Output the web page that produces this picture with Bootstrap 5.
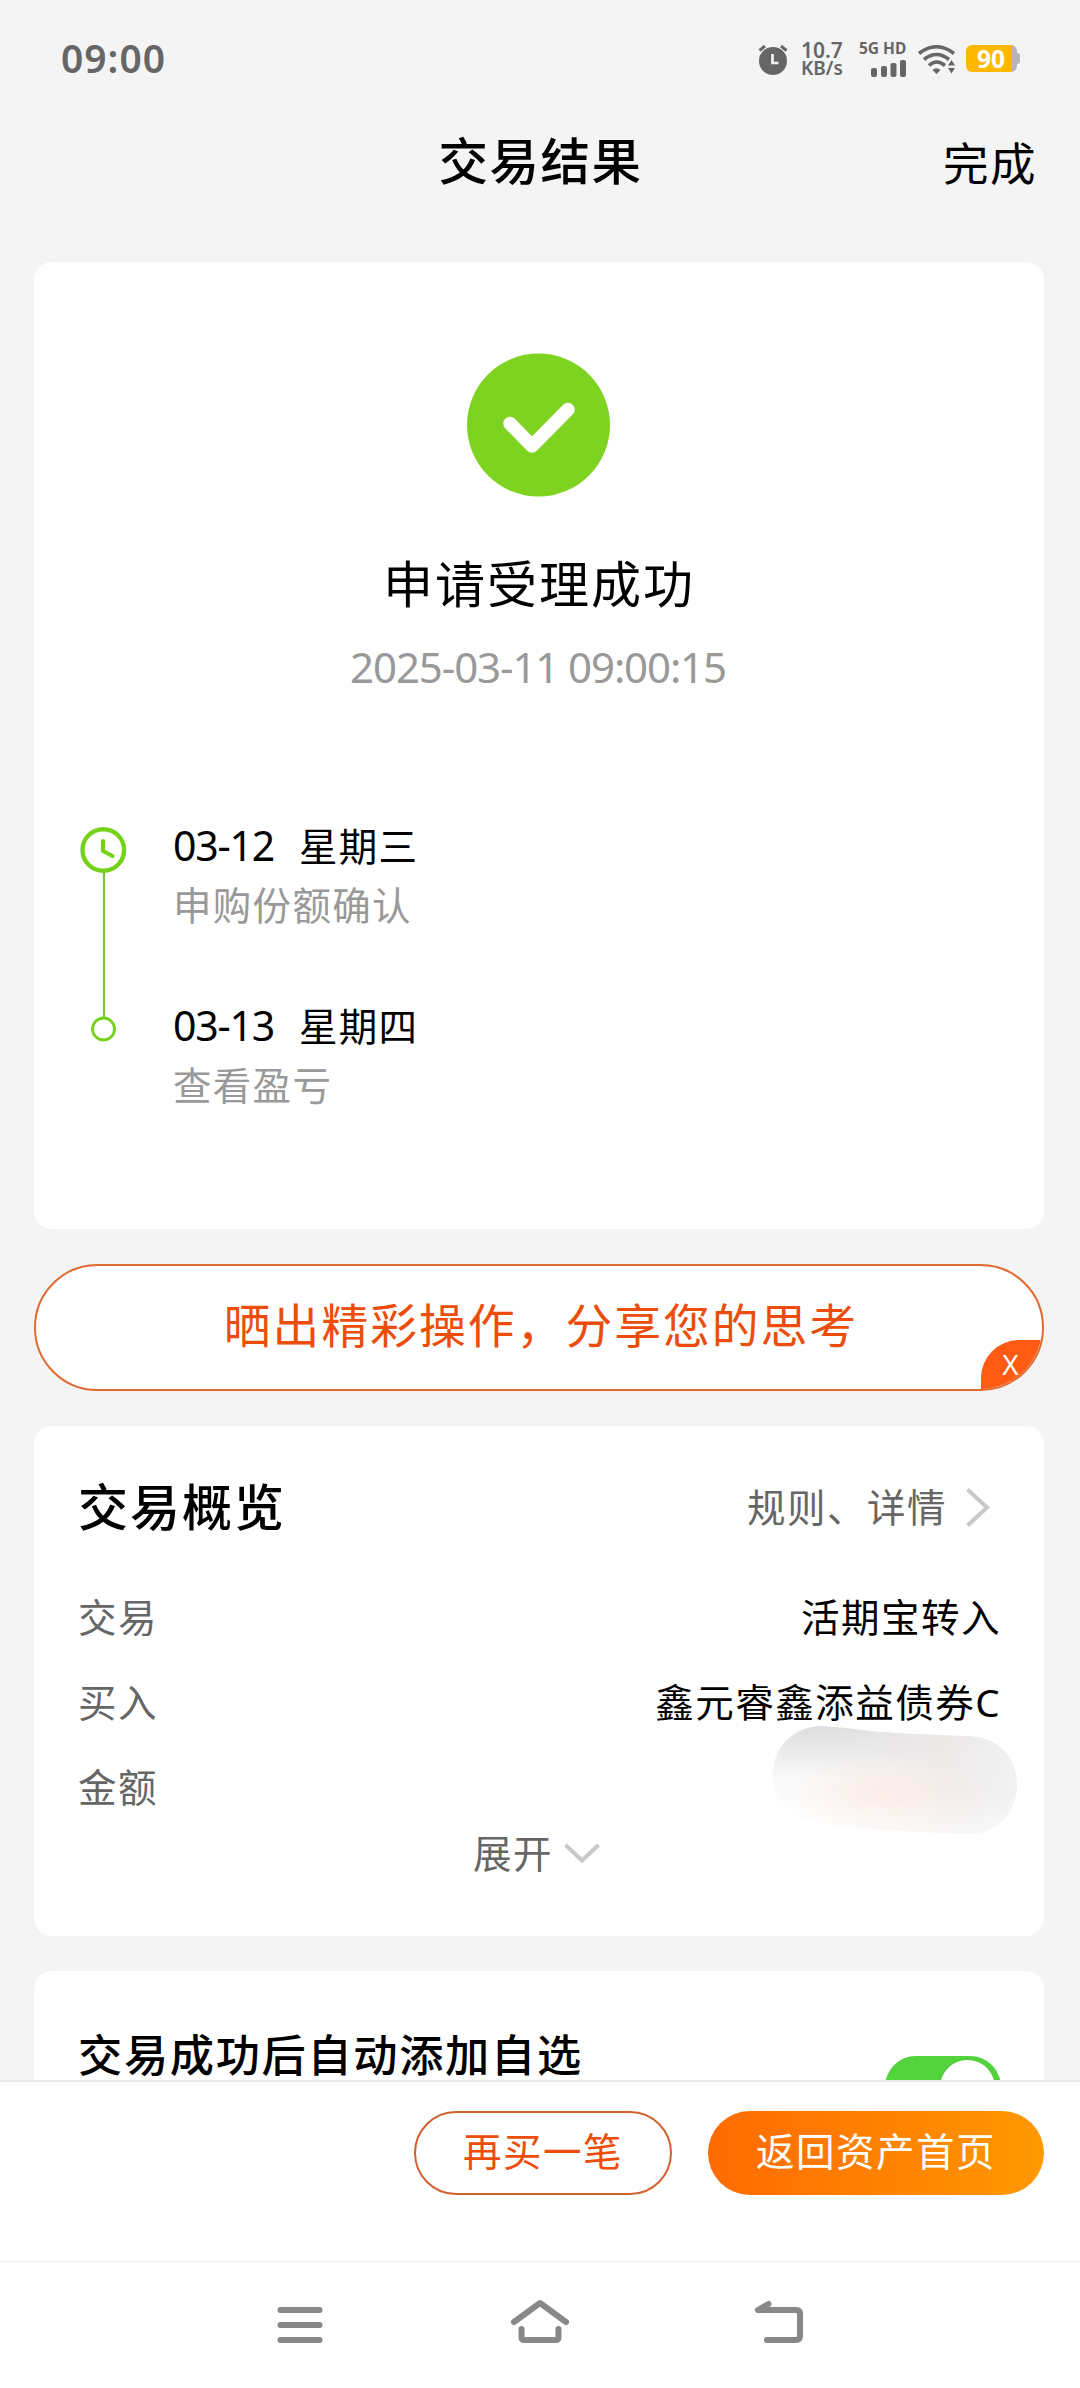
<!DOCTYPE html>
<html lang="zh-CN">
<head>
<meta charset="utf-8">
<meta name="viewport" content="width=device-width, initial-scale=1">
<title>交易结果</title>
<link href="https://cdn.jsdelivr.net/npm/bootstrap@5.3.0/dist/css/bootstrap.min.css" rel="stylesheet">
<style>
  body { font-family: "Noto Sans", "Noto Sans CJK SC", sans-serif; color: #000; background: #f4f4f4; }
  svg { display: block; flex: none; }
  .screen { width: 1080px; height: 2388px; }
  /* status bar */
  .status { height: 110px; color: #666; padding: 3px 60px 0 61px; }
  .clock { font-size: 39px; line-height: 48px; font-weight: 600; letter-spacing: 1px; margin-top: 31px; }
  .indicators { padding-top: 38px; }
  .speed { width: 46px; font-weight: 600; line-height: 18px; font-size: 21px; margin-left: 13px; margin-right: 1px; }
  .speed span + span { font-size: 19px; }
  .net { width: 49px; font-size: 15.5px; line-height: 15px; font-weight: 700; margin-left: 11px; margin-right: 1px; white-space: nowrap; }
  .battery { width: 51px; height: 27px; border-radius: 6px; background: linear-gradient(90deg, #ffb800 46px, #b5b5b5 46px); color: #fff; font-size: 24.5px; line-height: 27px; font-weight: 700; padding-right: 1px; }
  .battery-tip { width: 3px; height: 11px; background: #b5b5b5; border-radius: 0 3px 3px 0; }
  /* header */
  .title-bar { height: 152px; padding: 0 43px 50px 0; }
  .page-title { font-size: 49.5px; font-weight: 500; letter-spacing: 1.5px; line-height: 60px; padding-left: 44px; }
  .done { font-size: 45.5px; letter-spacing: 1.5px; line-height: 60px; padding-top: 3px; }
  /* content */
  .feed { padding: 0 36px 0 34px; gap: 35px; }
  .panel { background: #fff; border-radius: 18px; flex: none; }
  .result { height: 967px; padding-top: 91px; }
  .headline { font-size: 50px; letter-spacing: 2px; line-height: 60px; margin-top: 57px; }
  .stamp { font-size: 42px; letter-spacing: -1.1px; line-height: 50px; color: #999; margin-top: 28px; padding-right: 2px; }
  .steps { padding: 127px 0 0 45px; gap: 46px; }
  .step-row { height: 180px; }
  .step-day { font-size: 38.5px; letter-spacing: 1.2px; line-height: 52px; white-space: pre; }
  .step-day i { font-style: normal; font-size: 41px; letter-spacing: -1.2px; margin-right: 25px; }
  .sub { font-size: 38.5px; letter-spacing: 1.3px; line-height: 54px; color: #999; margin-top: 6px; }
  .share { height: 127px; border: 2px solid #e06a30; border-radius: 64px; background: #fff; color: #ec4d0a; font-size: 46.8px; letter-spacing: 2px; overflow: hidden; flex: none; padding: 0 0 5px 4px; }
  .share-x { right: 0; bottom: 0; width: 61px; height: 49px; background: #fd5a14; color: #fff; border-radius: 38px 0 0 0; font: 28px/44px "Noto Sans", sans-serif; letter-spacing: 0; padding: 2px 2px 0 0; }
  .overview { height: 510px; padding: 47px 43px 0 44px; }
  .h-card { font-size: 50px; letter-spacing: 2px; font-weight: 500; line-height: 68px; }
  .grey { color: #666; }
  .t40 { font-size: 38.5px; letter-spacing: 1.5px; line-height: 85px; }
  .rows { padding-top: 34px; }
  .expand { padding-right: 6px; gap: 11px; }
  .blotch { right: 27px; top: 300px; }
  .auto { height: 240px; padding: 56px 43px 0 44px; }
  .auto-t { font-size: 44.2px; letter-spacing: 1.7px; font-weight: 500; line-height: 56px; }
  .toggle { width: 116px; height: 62px; border-radius: 31px; background: #53d43c; padding: 4px 6px; margin-top: 29px; }
  .knob { width: 55px; height: 55px; background: #fff; box-shadow: 0 2px 4px rgba(0,0,0,.2); }
  /* bottom */
  .actions { height: 181px; background: #fff; border-top: 2px solid #e9e9e9; padding: 29px 36px 0 0; gap: 36px; flex: none; }
  .actions .btn { height: 84px; border-radius: 43px; font-size: 38.5px; letter-spacing: 1.5px; line-height: 1; padding: 0 0 3px; }
  .actions .btn-again { width: 258px; border: 2px solid #d0622f; color: #ec4d0a; background: #fff; }
  .actions .btn-home { width: 336px; border: 0; color: #fff; background: linear-gradient(90deg, #ff6a00, #ff9800); }
  .sysnav { height: 127px; background: #fff; border-top: 1px solid #eee; flex: none; padding: 36px 273px 0 273px; }
</style>
</head>
<body>
<div class="screen d-flex flex-column overflow-hidden">
  <div class="status d-flex justify-content-between align-items-start flex-shrink-0">
    <div class="clock">09:00</div>
    <div class="indicators d-flex align-items-start">
      <svg class="mt-1" width="30" height="30" viewBox="0 0 30 30"><circle cx="15" cy="16" r="14" fill="#666"/><path d="M1.500 5.500 7 1M28.500 5.500 23 1" stroke="#666" stroke-width="3"/><path d="M14.500 9v9h6" fill="none" stroke="#f4f4f4" stroke-width="2.700"/></svg>
      <div class="speed d-flex flex-column"><span>10.7</span><span>KB/s</span></div>
      <div class="net"><div>5G HD</div>
        <svg class="mt-1" width="48" height="18" viewBox="0 0 48 18" fill="#666"><rect x="12" y="8" width="6" height="9" rx="2"/><rect x="22" y="6" width="6" height="11" rx="2"/><rect x="31.500" y="3" width="6" height="14" rx="2"/><rect x="41" y="0" width="6" height="17" rx="2"/></svg></div>
      <svg class="mt-1 me-2 ms-2" width="41" height="30" viewBox="0 0 41 30"><g fill="none" stroke="#666" stroke-width="3.600"><path d="M2 8.500Q19.500-5 37 8.500"/><path d="M7 14.500Q19.500 4.500 32 14.500"/><path d="M12 20.500Q19.500 13.500 28 20.500"/></g><path d="M15.500 25Q19.500 21.500 23.500 25L19.500 29ZM31 20.500 34.500 15l3.500 5.500ZM31 23h7L34.500 28.500Z" fill="#666"/></svg>
      <div class="d-flex align-items-center mt-1"><div class="battery text-center">90</div><div class="battery-tip"></div></div>
    </div>
  </div>

  <header class="title-bar row g-0 align-items-center flex-shrink-0">
    <div class="col-4"></div>
    <div class="col-4 text-center page-title">交易结果</div>
    <div class="col-4 text-end done">完成</div>
  </header>

  <main class="feed d-flex flex-column flex-grow-1 overflow-hidden">
    <section class="panel result">
      <div class="d-flex flex-column align-items-center">
        <svg width="144" height="144" viewBox="0 0 144 144"><circle cx="71.500" cy="72" r="71.500" fill="#7ed321"/><path d="M43 70.500 65 93 101 56.500" fill="none" stroke="#fff" stroke-width="13.500" stroke-linecap="round" stroke-linejoin="round"/></svg>
        <div class="headline">申请受理成功</div>
        <div class="stamp">2025-03-11 09:00:15</div>
      </div>
      <div class="steps d-flex">
        <svg width="48" height="226" viewBox="0 0 48 226"><path d="M25 50V200" stroke="#7cc634" stroke-width="2.200"/><g fill="#fff" stroke="#76d11a"><circle cx="24.300" cy="31" r="20.800" stroke-width="4.400"/><circle cx="24.500" cy="210" r="11" stroke-width="2.800"/></g><path d="M24 22V32L33.500 37" fill="none" stroke="#76d11a" stroke-width="4.200" stroke-linecap="round" stroke-linejoin="round"/></svg>
        <div>
          <div class="step-row"><div class="step-day"><i>03-12</i>星期三</div><div class="sub">申购份额确认</div></div>
          <div class="step-row"><div class="step-day"><i>03-13</i>星期四</div><div class="sub">查看盈亏</div></div>
        </div>
      </div>
    </section>

    <section class="share position-relative d-flex align-items-center justify-content-center">
      晒出精彩操作，分享您的思考
      <span class="share-x position-absolute text-center">X</span>
    </section>

    <section class="panel overview position-relative">
      <div class="d-flex justify-content-between align-items-center">
        <div class="h-card">交易概览</div>
        <div class="d-flex align-items-center grey t40 lh-1">规则、详情
          <svg class="ms-3 me-2" width="30" height="40" viewBox="0 0 30 40"><path d="M4.500 2.500 24 20.500 4.500 38.500" fill="none" stroke="#c8c8c8" stroke-width="4"/></svg></div>
      </div>
      <div class="rows t40">
        <div class="d-flex justify-content-between"><span class="grey">交易</span><span>活期宝转入</span></div>
        <div class="d-flex justify-content-between"><span class="grey">买入</span><span>鑫元睿鑫添益债券C</span></div>
        <div class="grey">金额</div>
      </div>
      <div class="expand d-flex justify-content-center align-items-center grey t40 lh-1 mt-1">展开
        <svg width="36" height="22" viewBox="0 0 36 22"><path d="M1.500 3 18 18.500 34.500 3" fill="none" stroke="#c8c8c8" stroke-width="4"/></svg></div>
      <svg class="blotch position-absolute" width="244" height="108" viewBox="0 0 244 108">
        <defs>
          <linearGradient id="bv" x1="0" y1="0" x2="0" y2="1"><stop offset="0" stop-color="#dedede"/><stop offset=".5" stop-color="#fafafa"/><stop offset="1" stop-color="#fff"/></linearGradient>
          <linearGradient id="bh" x1="0" y1="0" x2="1" y2="0"><stop offset=".2" stop-color="#ece9e8" stop-opacity="0"/><stop offset=".7" stop-color="#ece9e8" stop-opacity=".9"/><stop offset="1" stop-color="#f2f2f2"/></linearGradient>
          <radialGradient id="bp" cx=".46" cy=".68" r=".42"><stop offset="0" stop-color="#fdece6"/><stop offset="1" stop-color="#fdece6" stop-opacity="0"/></radialGradient>
          <linearGradient id="bw" x1="0" y1="0" x2="0" y2="1"><stop offset=".6" stop-color="#fff" stop-opacity="0"/><stop offset="1" stop-color="#fff" stop-opacity=".6"/></linearGradient>
          <path id="bs" d="M0 48C0 20 22 0 49 0L74 2Q98 6 130 7.500L198 10.500C226 12 244 32 244 59 244 86 224 108 196 108L130 105Q70 103 40 96C14 90 0 70 0 48Z"/>
        </defs>
        <use href="#bs" fill="url(#bv)"/><use href="#bs" fill="url(#bh)"/><use href="#bs" fill="url(#bp)"/><use href="#bs" fill="url(#bw)"/>
      </svg>
    </section>

    <section class="panel auto d-flex justify-content-between align-items-start">
      <div class="auto-t">交易成功后自动添加自选</div>
      <div class="toggle d-flex justify-content-end"><div class="knob rounded-circle"></div></div>
    </section>
  </main>

  <div class="actions d-flex justify-content-end align-items-start">
    <button class="btn btn-again">再买一笔</button>
    <button class="btn btn-home">返回资产首页</button>
  </div>
  <nav class="sysnav d-flex justify-content-between align-items-start">
    <svg width="54" height="50" viewBox="0 0 54 50"><path d="M7.500 12H46.500M7.500 27H46.500M7.500 42H46.500" stroke="#888" stroke-width="6" stroke-linecap="round"/></svg>
    <svg width="60" height="50" viewBox="0 0 60 50" fill="none" stroke="#888" stroke-width="6" stroke-linecap="round" stroke-linejoin="round"><path d="M4 24 30 5 56 24"/><path d="M11.500 31V39Q11.500 42 14.500 42H45.500Q48.500 42 48.500 39V31"/></svg>
    <svg width="54" height="50" viewBox="0 0 54 50" fill="none" stroke="#888" stroke-width="6" stroke-linecap="round" stroke-linejoin="round"><path d="M15.500 6 5 12H43Q47 12 47 16V38Q47 42 43 42H14"/></svg>
  </nav>
</div>
<script src="https://cdn.jsdelivr.net/npm/bootstrap@5.3.0/dist/js/bootstrap.bundle.min.js"></script>
</body>
</html>
